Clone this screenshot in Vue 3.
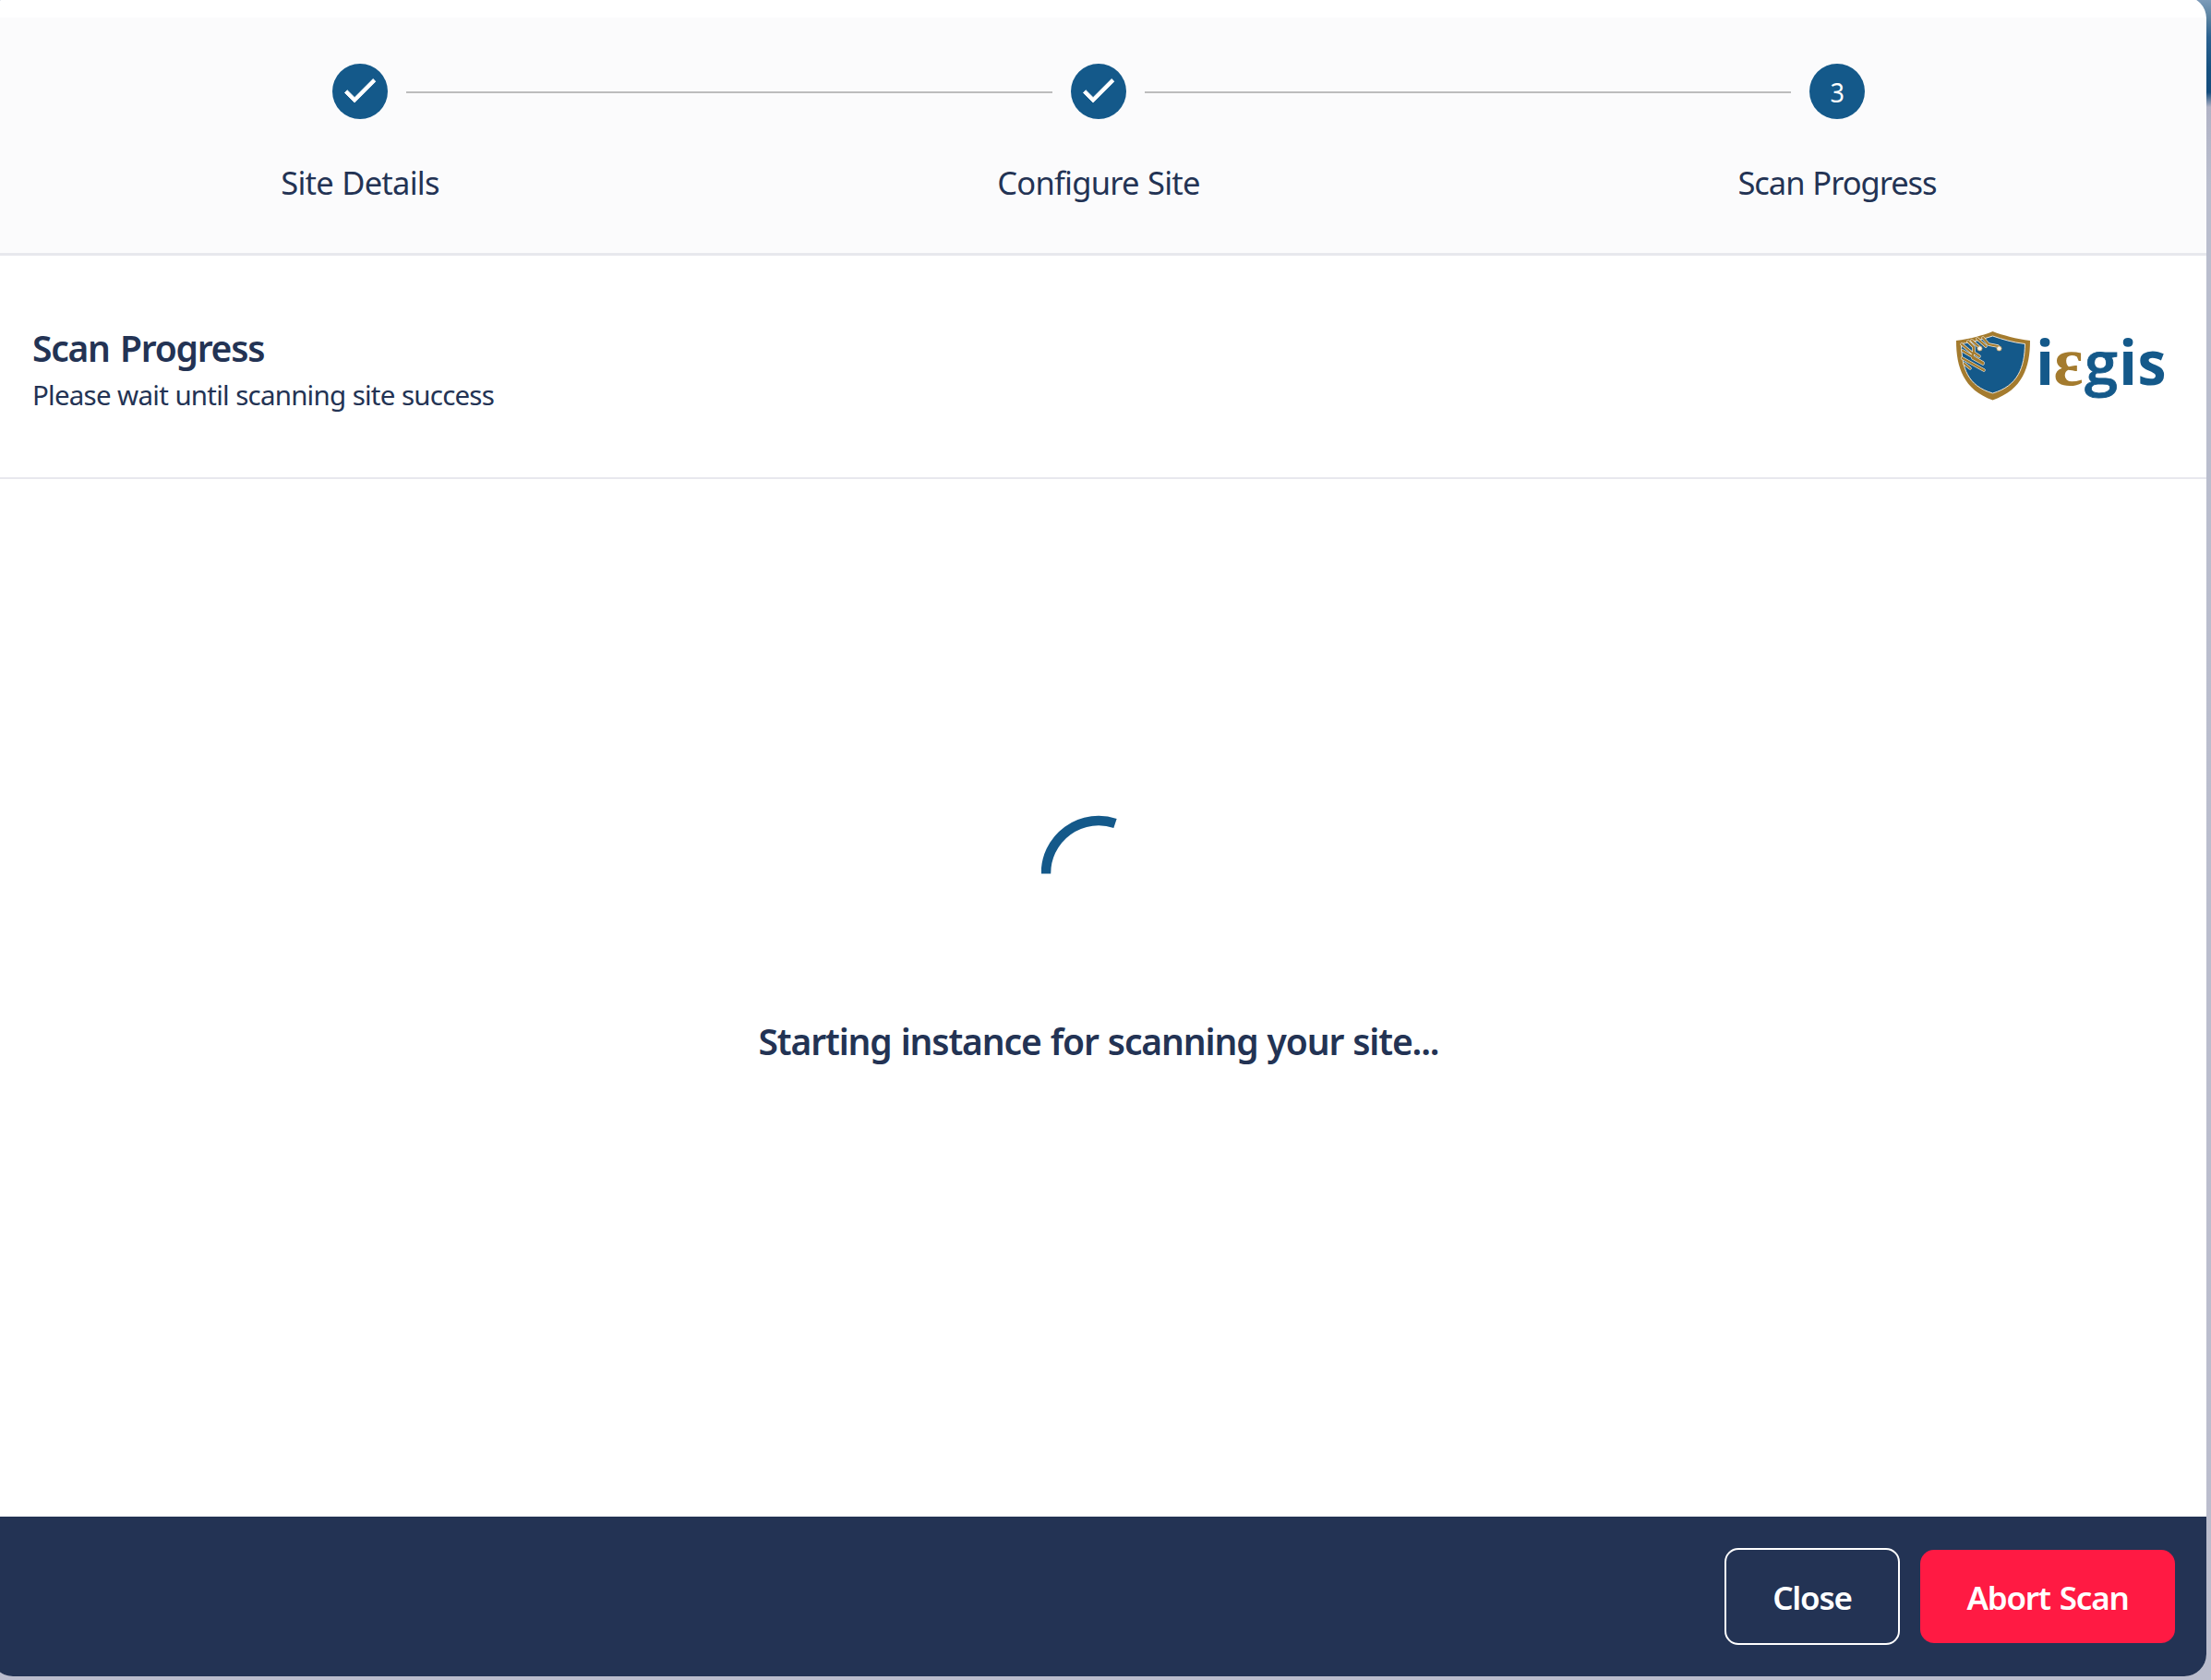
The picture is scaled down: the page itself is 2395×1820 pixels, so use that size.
<script setup>
const steps = [
  { label: 'Site Details', done: true, spacing: -0.75 },
  { label: 'Configure Site', done: true, spacing: -0.75 },
  { label: 'Scan Progress', done: false, spacing: -1.05 },
]
</script>

<template>
  <div class="page">
    <div class="dialog">
      <header class="stepper">
        <div v-for="(step, i) in steps" :key="step.label" class="step">
          <div class="track">
            <span class="line" :class="{ hidden: i === 0 }"></span>
            <span class="bullet">
              <svg v-if="step.done" viewBox="0 0 24 24" width="45.5" height="45.5">
                <path d="M9 16.17 4.83 12l-1.42 1.41L9 19 21 7l-1.41-1.41z" fill="#fff" stroke="#fff" stroke-width="0.5" />
              </svg>
              <span v-else class="number">{{ i + 1 }}</span>
            </span>
            <span class="line" :class="{ hidden: i === steps.length - 1 }"></span>
          </div>
          <div class="label" :style="{ letterSpacing: step.spacing + 'px' }">{{ step.label }}</div>
        </div>
      </header>

      <section class="heading">
        <div>
          <h1>Scan Progress</h1>
          <p>Please wait until scanning site success</p>
        </div>
        <svg class="logo" viewBox="0 0 260 110" width="260" height="110">
          <path d="M19 29C34 27 48 23.500 58.500 19C70 23.500 84 27 99 29C99 58 91 82 58.500 93.500C27 82 19 58 19 29Z" fill="#a47b2e" />
          <path d="M24.500 32.500C38 30.500 49 27 58.500 24C69 27.500 80 31 93.500 32.500C93 58 86 78 58.500 86C31 78 25 58 24.500 32.500Z" fill="#14598a" stroke="#e9e4da" stroke-width="1" />
          <g fill="none" stroke-linecap="round" stroke-linejoin="round">
            <g stroke="#efe9dc" stroke-width="3.400">
              <path d="M25 33L37 43V48L48 54M26 40L48 53M25.500 48L49 61M28 54L34 59M32 30L38 36V42L44 46M36 29L45 37M42 27L51 35M48 26L54 33L64 35L65.500 37" />
            </g>
            <g stroke="#a47b2e" stroke-width="2.200">
              <path d="M25 33L37 43V48L48 54M26 40L48 53M25.500 48L49 61M28 54L34 59M32 30L38 36V42L44 46M36 29L45 37M42 27L51 35M48 26L54 33L64 35L65.500 37" />
            </g>
          </g>
          <circle cx="44.500" cy="37.500" r="2.600" fill="#f6f1e6" stroke="#b99657" stroke-width="0.800" />
          <circle cx="65.500" cy="37.500" r="2.600" fill="#f6f1e6" stroke="#b99657" stroke-width="0.800" />
          <g class="wordmark">
            <text x="105" y="77">i</text>
            <text x="124.500" y="77" class="epsilon" textLength="32" lengthAdjust="spacingAndGlyphs">ε</text>
            <text x="158" y="76" class="g" textLength="36" lengthAdjust="spacingAndGlyphs">g</text>
            <text x="195" y="77">i</text>
            <text x="215.500" y="77" textLength="31" lengthAdjust="spacingAndGlyphs">s</text>
          </g>
        </svg>
      </section>

      <main class="progress">
        <svg class="spinner" viewBox="0 0 124 124" width="124" height="124">
          <path d="M5 63.500A57 57 0 0 1 80 8.900" fill="none" stroke="#14598a" stroke-width="10.500" />
        </svg>
        <div class="status">Starting instance for scanning your site...</div>
      </main>

      <footer class="actions">
        <button class="close">Close</button>
        <button class="abort">Abort Scan</button>
      </footer>
    </div>
  </div>
</template>

<style>
body {
  margin: 0;
  overflow: hidden;
}
</style>

<style scoped>
.page {
  width: 2395px;
  height: 1820px;
  overflow: hidden;
  background: linear-gradient(180deg, #7c9bb9 0, #57809f 20px, #2b6190 40px, #15507f 75px, #134b7c 100px, #b0b2c5 116px, #b9bdcd 200px, #bbbdcd 100%);
  font-family: 'Noto Sans', 'Open Sans', sans-serif;
  color: #233354;
}
.dialog {
  box-sizing: border-box;
  width: 2400px;
  height: 1820px;
  margin: -4px 0 0 -10px;
  padding-top: 23px;
  border-radius: 24px;
  background: #fff;
  overflow: hidden;
  display: flex;
  flex-direction: column;
}
.page::before {
  content: '';
  display: table;
}
.stepper {
  box-sizing: border-box;
  height: 258px;
  flex: none;
  padding-top: 50px;
  background: #fbfbfc;
  border-bottom: 3px solid #e7e8ed;
  display: flex;
}
.step {
  flex: 1;
}
.track {
  height: 60px;
  display: flex;
  align-items: center;
  gap: 20px;
}
.line {
  flex: 1;
  height: 2px;
  margin-top: 2px;
  background: #bdbdbd;
}
.line.hidden {
  visibility: hidden;
}
.bullet {
  width: 60px;
  height: 60px;
  border-radius: 50%;
  background: #14598a;
  color: #fff;
  font-size: 29px;
  line-height: 60px;
  display: flex;
  align-items: center;
  justify-content: center;
}
.bullet svg {
  margin-bottom: 2px;
}
.number {
  padding-top: 2px;
  transform: scaleX(0.93);
}
.track .line:first-child {
  margin-left: -20px;
}
.track .line:last-child {
  margin-right: -20px;
}
.label {
  margin-top: 44px;
  font-size: 34.500px;
  line-height: 50px;
  word-spacing: 1px;
  text-align: center;
}
.heading {
  box-sizing: border-box;
  height: 242px;
  flex: none;
  padding: 63px 30px 0 45px;
  border-bottom: 2px solid #e8e8ee;
  display: flex;
  justify-content: space-between;
}
.heading h1 {
  margin: 10px 0 0;
  font-size: 39px;
  font-weight: 600;
  line-height: 54px;
  letter-spacing: -1.250px;
  word-spacing: 2.500px;
}
.heading p {
  margin: 4px 0 0;
  font-size: 29.500px;
  line-height: 40px;
  letter-spacing: -0.780px;
  word-spacing: 0.500px;
}
.wordmark {
  font-family: 'Open Sans', sans-serif;
  font-size: 66px;
  font-weight: 700;
  fill: #14598a;
}
.wordmark .g {
  font-size: 64px;
  font-weight: 600;
  stroke: #14598a;
  stroke-width: 0.800px;
}
.wordmark .epsilon {
  font-family: 'Liberation Serif', serif;
  font-size: 76px;
  font-weight: 700;
  fill: #a47b2e;
}
.progress {
  flex: 1;
  padding-top: 364px;
  display: flex;
  flex-direction: column;
  align-items: center;
}
.status {
  margin-top: 94px;
  font-size: 39px;
  font-weight: 600;
  line-height: 54px;
  letter-spacing: -1.130px;
  word-spacing: 1px;
}
.actions {
  box-sizing: border-box;
  height: 173px;
  flex: none;
  padding-right: 34px;
  background: #233354;
  display: flex;
  align-items: center;
  justify-content: flex-end;
  gap: 22px;
}
.actions button {
  box-sizing: border-box;
  padding: 2px 0 0;
  border-radius: 15px;
  color: #fff;
  font-family: inherit;
  font-size: 35px;
  font-weight: 600;
  letter-spacing: -1.200px;
  word-spacing: 2px;
}
.close {
  width: 190px;
  height: 105px;
  border: 2px solid #fff;
  background: transparent;
}
.abort {
  width: 276px;
  height: 101px;
  border: 0;
  background: #ff1a43;
}
</style>
